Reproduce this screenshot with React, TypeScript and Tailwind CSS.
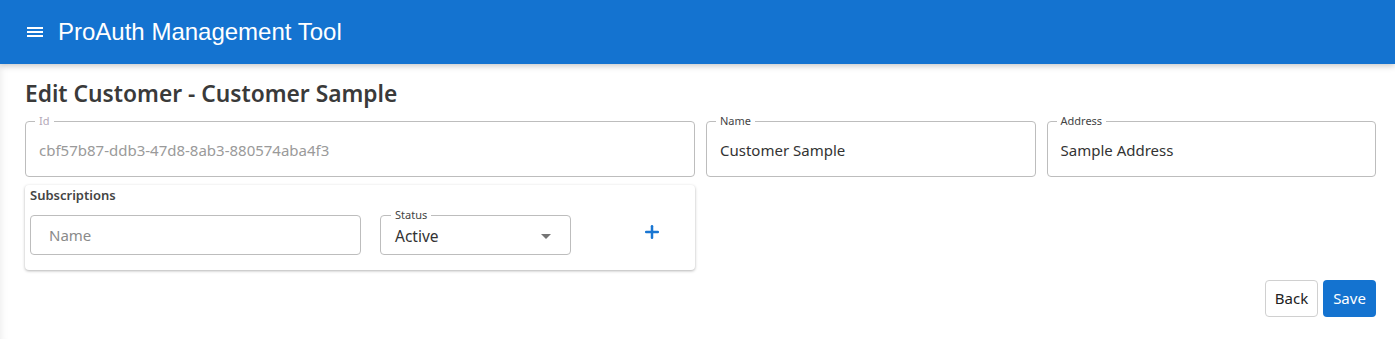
import { Plus } from "lucide-react";

const font = { fontFamily: '"Noto Sans", "Open Sans", sans-serif' };

// Outlined field with a floating label sitting on the border
function OutlinedField({
  label,
  value,
  disabled,
  className,
}: {
  label: string;
  value: string;
  disabled?: boolean;
  className?: string;
}) {
  return (
    <fieldset
      className={`relative h-[62px] rounded-[4px] border border-[#bdbdbd] px-[13px] ${className ?? ""}`}
    >
      <legend
        className={`ml-[-4px] px-[4px] text-[11px] leading-[12px] ${disabled ? "text-[#b3a7b8]" : "text-[#444]"}`}
      >
        {label}
      </legend>
      <div
        className={`pt-[13px] text-[15px] leading-[20px] ${disabled ? "text-[#9a9a9a]" : "text-[#333]"}`}
      >
        {value}
      </div>
    </fieldset>
  );
}

function HamburgerIcon() {
  return (
    <svg width="16" height="12" viewBox="0 0 16 12" fill="white">
      <rect x="0" y="1" width="16" height="2" />
      <rect x="0" y="5" width="16" height="2" />
      <rect x="0" y="9" width="16" height="2" />
    </svg>
  );
}

export default function App() {
  return (
    <div className="h-[339px] w-[1395px] overflow-hidden bg-white" style={font}>
      {/* Top app bar */}
      <header className="relative z-10 flex h-[64px] items-center gap-[15px] bg-[#1473d0] pl-[27px] shadow-[0_2px_6px_rgba(0,0,0,0.22)]">
        <HamburgerIcon />
        <h1
          className="text-[24px] leading-none text-white"
          style={{ fontFamily: '"Liberation Sans", Arial, sans-serif' }}
        >
          ProAuth Management Tool
        </h1>
      </header>

      <main className="h-[275px] pl-[25px] pr-[19px] pt-[15px] shadow-[inset_8px_0_8px_-8px_rgba(0,0,0,0.1)]">
        <h2 className="text-[22.75px] font-semibold leading-[30px] text-[#3a3a3a]">
          Edit Customer - Customer Sample
        </h2>

        <div className="mt-[6px] grid grid-cols-12 gap-[11px]">
          <OutlinedField
            className="col-span-6"
            label="Id"
            value="cbf57b87-ddb3-47d8-8ab3-880574aba4f3"
            disabled
          />
          <OutlinedField className="col-span-3" label="Name" value="Customer Sample" />
          <OutlinedField className="col-span-3" label="Address" value="Sample Address" />
        </div>

        <div className="mt-[8px] grid grid-cols-12 gap-[11px]">
          <section className="col-span-6 h-[85px] rounded-[4px] bg-white px-[5px] pt-[1px] shadow-[0_1px_3px_rgba(0,0,0,0.3)]">
            <h3 className="text-[13px] font-semibold leading-[18px] text-[#444]">
              Subscriptions
            </h3>
            <div className="mt-[8px] flex items-center">
              <div className="flex h-[40px] w-[331px] items-center rounded-[4px] border border-[#bdbdbd] px-[18px] text-[15px] text-[#8a8a8a]">
                Name
              </div>
              <fieldset className="relative ml-[19px] h-[46px] w-[191px] -translate-y-[3px] rounded-[4px] border border-[#bdbdbd] px-[14px]">
                <legend className="ml-[-4px] px-[4px] text-[11px] leading-[12px] text-[#444]">
                  Status
                </legend>
                <div className="flex items-center justify-between pt-[5px]">
                  <span className="text-[15.5px] leading-[20px] text-[#333]">Active</span>
                  <svg width="10" height="5" viewBox="0 0 10 5" className="mr-[5px]">
                    <path d="M0 0 L10 0 L5 5 Z" fill="#757575" />
                  </svg>
                </div>
              </fieldset>
              <button className="ml-[69px] flex h-[24px] w-[24px] -translate-y-[3px] items-center justify-center text-[#1976d2]">
                <Plus size={20} strokeWidth={3} />
              </button>
            </div>
          </section>
        </div>

        <div className="mt-[10px] flex justify-end gap-[5px]">
          <button className="h-[37px] w-[53px] rounded-[4px] border border-[#d0d0d0] bg-white text-[15px] text-[#222]">
            Back
          </button>
          <button className="h-[37px] w-[53px] rounded-[4px] bg-[#1473d0] text-[15px] text-white">
            Save
          </button>
        </div>
      </main>
    </div>
  );
}
